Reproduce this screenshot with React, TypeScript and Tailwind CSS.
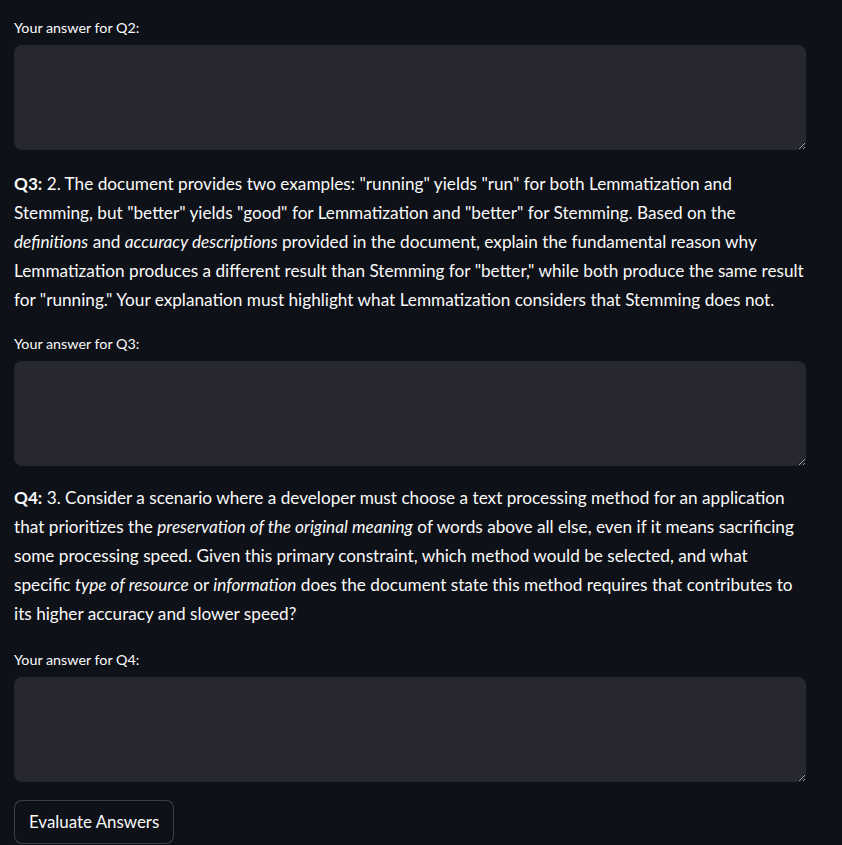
import React from "react";

const font = { fontFamily: "Lato, 'Noto Sans', sans-serif" };

function Answer({ label, className }: { label: string; className?: string }) {
  return (
    <div className={className}>
      <div className="h-[22px] text-[14.3px] leading-[22px] text-[#fafafa]">{label}</div>
      <textarea
        className="mt-[6px] block h-[105px] w-full resize-y rounded-lg border-0 bg-[#262730] px-3 py-2 text-[16px] text-[#fafafa] outline-none scheme-dark"
        defaultValue=""
      />
    </div>
  );
}

function Question({ lines, className }: { lines: React.ReactNode[]; className?: string }) {
  return (
    <div className={"text-[17.2px] leading-[29px] text-[#fafafa] " + (className || "")}>
      {lines.map((l, i) => (
        <div key={i} className="whitespace-nowrap">
          {l}
        </div>
      ))}
    </div>
  );
}

export default function App() {
  return (
    <div className="min-h-screen w-full bg-[#0e1117]" style={font}>
      <div className="ml-[14px] w-[792px] pt-[17px] pb-10">
        <Answer label="Your answer for Q2:" />

        <Question
          className="mt-[19px]"
          lines={[
            <>
              <b>Q3:</b> 2. The document provides two examples: "running" yields "run" for both Lemmatization and
            </>,
            <>Stemming, but "better" yields "good" for Lemmatization and "better" for Stemming. Based on the</>,
            <>
              <i>definitions</i> and <i>accuracy descriptions</i> provided in the document, explain the fundamental reason why
            </>,
            <>Lemmatization produces a different result than Stemming for "better," while both produce the same result</>,
            <>for "running." Your explanation must highlight what Lemmatization considers that Stemming does not.</>,
          ]}
        />

        <Answer label="Your answer for Q3:" className="mt-[19px]" />

        <Question
          className="mt-[17px]"
          lines={[
            <>
              <b>Q4:</b> 3. Consider a scenario where a developer must choose a text processing method for an application
            </>,
            <>
              that prioritizes the <i>preservation of the original meaning</i> of words above all else, even if it means sacrificing
            </>,
            <>some processing speed. Given this primary constraint, which method would be selected, and what</>,
            <>
              specific <i>type of resource</i> or <i>information</i> does the document state this method requires that contributes to
            </>,
            <>its higher accuracy and slower speed?</>,
          ]}
        />

        <Answer label="Your answer for Q4:" className="mt-[21px]" />

        <button className="mt-[18px] h-[44px] rounded-lg border border-[#fafafa33] bg-[#0e1117] px-[14px] text-[16.9px] text-[#fafafa]">
          Evaluate Answers
        </button>
      </div>
    </div>
  );
}
